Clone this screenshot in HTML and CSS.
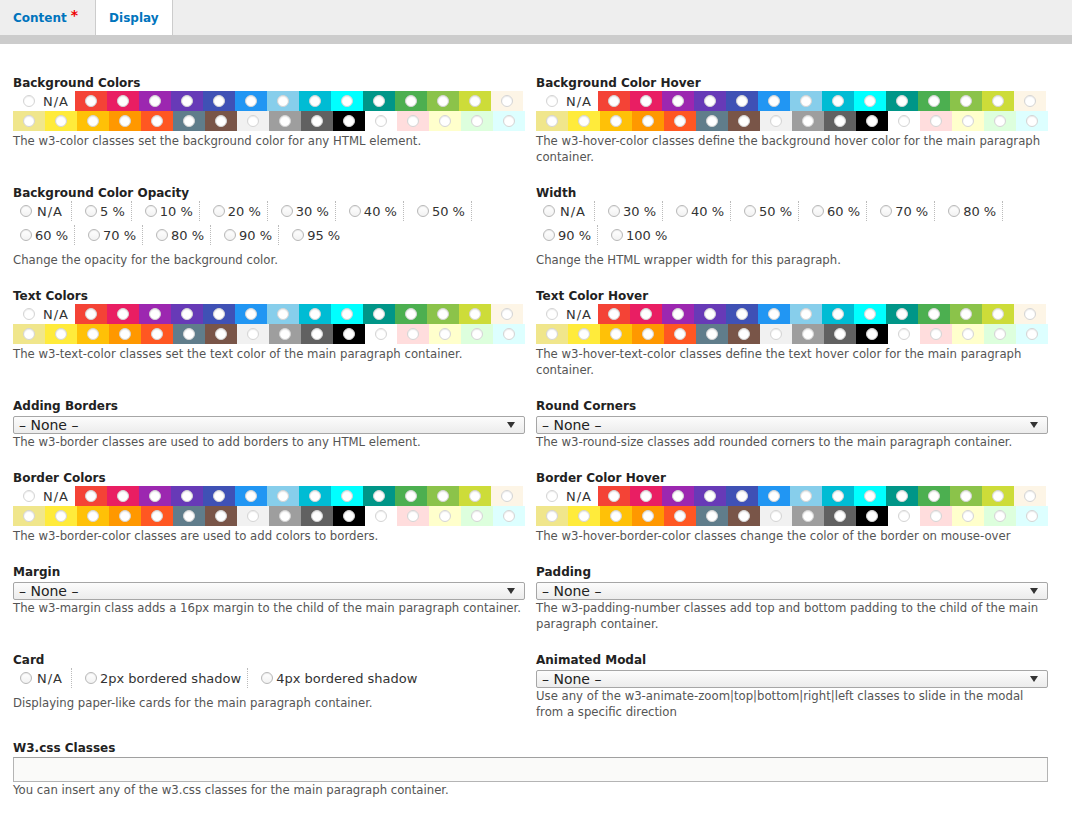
FILE: index.html
```html
<!DOCTYPE html>
<html lang="en">
<head>
    <meta charset="UTF-8">
    <meta name="viewport" content="width=device-width, initial-scale=1.0">
    <title>Paragraph Display Settings</title>
    <link rel="stylesheet" href="styles.css">
</head>
<body>
    <div class="tabs">
        <a class="tab tab-content" href="#">Content <span class="req">*</span></a>
        <a class="tab active" href="#">Display</a>
    </div>
    <div class="tab-line"></div>

    <form class="display-form">
        <div class="field">
            <div class="field-label">Background Colors</div>
            <div class="swatches" data-name="bg_color"></div>
            <div class="desc">The w3-color classes set the background color for any HTML element.</div>
        </div>
        <div class="field">
            <div class="field-label">Background Color Hover</div>
            <div class="swatches" data-name="bg_hover"></div>
            <div class="desc">The w3-hover-color classes define the background hover color for the main paragraph container.</div>
        </div>

        <div class="field">
            <div class="field-label">Background Color Opacity</div>
            <div class="options">
                <label class="option"><input type="radio" name="opacity"> <span class="na">N/A</span></label>
                <label class="option"><input type="radio" name="opacity"> 5 %</label>
                <label class="option"><input type="radio" name="opacity"> 10 %</label>
                <label class="option"><input type="radio" name="opacity"> 20 %</label>
                <label class="option"><input type="radio" name="opacity"> 30 %</label>
                <label class="option"><input type="radio" name="opacity"> 40 %</label>
                <label class="option"><input type="radio" name="opacity"> 50 %</label>
                <label class="option"><input type="radio" name="opacity"> 60 %</label>
                <label class="option"><input type="radio" name="opacity"> 70 %</label>
                <label class="option"><input type="radio" name="opacity"> 80 %</label>
                <label class="option"><input type="radio" name="opacity"> 90 %</label>
                <label class="option"><input type="radio" name="opacity"> 95 %</label>
            </div>
            <div class="desc">Change the opacity for the background color.</div>
        </div>
        <div class="field">
            <div class="field-label">Width</div>
            <div class="options">
                <label class="option"><input type="radio" name="width"> <span class="na">N/A</span></label>
                <label class="option"><input type="radio" name="width"> 30 %</label>
                <label class="option"><input type="radio" name="width"> 40 %</label>
                <label class="option"><input type="radio" name="width"> 50 %</label>
                <label class="option"><input type="radio" name="width"> 60 %</label>
                <label class="option"><input type="radio" name="width"> 70 %</label>
                <label class="option"><input type="radio" name="width"> 80 %</label>
                <label class="option"><input type="radio" name="width"> 90 %</label>
                <label class="option"><input type="radio" name="width"> 100 %</label>
            </div>
            <div class="desc">Change the HTML wrapper width for this paragraph.</div>
        </div>

        <div class="field">
            <div class="field-label">Text Colors</div>
            <div class="swatches" data-name="text_color"></div>
            <div class="desc">The w3-text-color classes set the text color of the main paragraph container.</div>
        </div>
        <div class="field">
            <div class="field-label">Text Color Hover</div>
            <div class="swatches" data-name="text_hover"></div>
            <div class="desc">The w3-hover-text-color classes define the text hover color for the main paragraph container.</div>
        </div>

        <div class="field">
            <div class="field-label">Adding Borders</div>
            <div class="select-wrap">
                <select><option>&ndash; None &ndash;</option></select>
            </div>
            <div class="desc">The w3-border classes are used to add borders to any HTML element.</div>
        </div>
        <div class="field">
            <div class="field-label">Round Corners</div>
            <div class="select-wrap">
                <select><option>&ndash; None &ndash;</option></select>
            </div>
            <div class="desc">The w3-round-size classes add rounded corners to the main paragraph container.</div>
        </div>

        <div class="field">
            <div class="field-label">Border Colors</div>
            <div class="swatches" data-name="border_color"></div>
            <div class="desc">The w3-border-color classes are used to add colors to borders.</div>
        </div>
        <div class="field">
            <div class="field-label">Border Color Hover</div>
            <div class="swatches" data-name="border_hover"></div>
            <div class="desc">The w3-hover-border-color classes change the color of the border on mouse-over</div>
        </div>

        <div class="field">
            <div class="field-label">Margin</div>
            <div class="select-wrap">
                <select><option>&ndash; None &ndash;</option></select>
            </div>
            <div class="desc">The w3-margin class adds a 16px margin to the child of the main paragraph container.</div>
        </div>
        <div class="field">
            <div class="field-label">Padding</div>
            <div class="select-wrap">
                <select><option>&ndash; None &ndash;</option></select>
            </div>
            <div class="desc">The w3-padding-number classes add top and bottom padding to the child of the main paragraph container.</div>
        </div>

        <div class="field">
            <div class="field-label">Card</div>
            <div class="options">
                <label class="option"><input type="radio" name="card"> <span class="na">N/A</span></label>
                <label class="option"><input type="radio" name="card"> 2px bordered shadow</label>
                <label class="option"><input type="radio" name="card"> 4px bordered shadow</label>
            </div>
            <div class="desc">Displaying paper-like cards for the main paragraph container.</div>
        </div>
        <div class="field">
            <div class="field-label">Animated Modal</div>
            <div class="select-wrap">
                <select><option>&ndash; None &ndash;</option></select>
            </div>
            <div class="desc">Use any of the w3-animate-zoom|top|bottom|right|left classes to slide in the modal from a specific direction</div>
        </div>

        <div class="field field-wide">
            <div class="field-label">W3.css Classes</div>
            <input class="text-input" type="text">
            <div class="desc">You can insert any of the w3.css classes for the main paragraph container.</div>
        </div>
    </form>

    <script>
        // build the colour pickers
        const rowOne = ['red', 'pink', 'purple', 'deep-purple', 'indigo', 'blue', 'light-blue',
            'cyan', 'aqua', 'teal', 'green', 'light-green', 'lime', 'sand'];
        const rowTwo = ['khaki', 'yellow', 'amber', 'orange', 'deep-orange', 'blue-grey', 'brown',
            'light-grey', 'grey', 'dark-grey', 'black', 'white', 'pale-red', 'pale-yellow',
            'pale-green', 'pale-blue'];

        const swatch = (name, color) =>
            `<label class="swatch w3-${color}" title="${color}"><input type="radio" name="${name}" value="w3-${color}"></label>`;

        document.querySelectorAll('.swatches').forEach(box => {
            const name = box.dataset.name;
            box.innerHTML = `
                <div class="swatch-row">
                    <label class="swatch swatch-na"><input type="radio" name="${name}" value=""><span class="na">N/A</span></label>
                    ${rowOne.map(c => swatch(name, c)).join('')}
                </div>
                <div class="swatch-row">
                    ${rowTwo.map(c => swatch(name, c)).join('')}
                </div>
            `;
        });
    </script>
</body>
</html>
```

FILE: styles.css
```css
body {
    margin: 0;
    font-family: "DejaVu Sans", sans-serif;
    font-size: 12px;
    color: #333;
    background: #fff;
}

/* tabs */
.tabs {
    display: flex;
    height: 35px;
    background: #eee;
}

.tab {
    display: flex;
    align-items: center;
    padding: 0 13px;
    color: #0074bd;
    font-weight: bold;
    font-size: 12px;
    text-decoration: none;
}

.tab-content {
    padding-right: 17px;
}

.tab .req {
    color: #e00;
    margin-left: 4px;
    position: relative;
    top: -3px;
    font-size: 14px;
}

.tab.active {
    background: #fff;
    border-left: 1px solid #ccc;
    border-right: 1px solid #ccc;
}

.tab-line {
    height: 9px;
    background: #ccc;
}

/* form grid */
.display-form {
    display: grid;
    grid-template-columns: 512px 512px;
    column-gap: 11px;
    row-gap: 20px;
    padding: 31px 0 20px 13px;
}

.field-wide {
    grid-column: 1 / 3;
}

.field-label {
    font-weight: bold;
    font-size: 12px;
    line-height: 16px;
    color: #222;
}

.desc {
    margin-top: 2px;
    line-height: 16px;
    font-size: 11.7px;
    color: #555;
}

.select-wrap + .desc,
.text-input + .desc {
    margin-top: 0;
}

.na {
    letter-spacing: 1px;
}

/* radios */
input[type="radio"] {
    appearance: none;
    -webkit-appearance: none;
    margin: 0;
    width: 12px;
    height: 12px;
    border-radius: 50%;
    border: 1px solid #b8b8b8;
    background: linear-gradient(#fff, #f2f2f2);
    box-shadow: inset 0 1px 1px rgba(0, 0, 0, 0.08);
    flex: none;
}

.swatch-row {
    display: flex;
}

.swatch {
    width: 32px;
    height: 20px;
    display: flex;
    align-items: center;
    justify-content: center;
}

.swatch input[type="radio"] {
    border-color: #d4d4d4;
    background: #fff;
}

.swatch-na {
    width: 62px;
    justify-content: flex-start;
    padding-left: 10px;
    box-sizing: border-box;
    font-size: 13px;
}

.swatch-na .na {
    margin-left: 8px;
}

.options {
    display: flex;
    flex-wrap: wrap;
    row-gap: 4px;
    padding-bottom: 5px;
}

.option {
    display: flex;
    align-items: center;
    height: 20px;
    padding: 0 6px 0 7px;
    margin-right: 6px;
    border-right: 1px dotted #bbb;
    font-size: 13px;
    color: #333;
}

.option:last-child {
    border-right: none;
}

.option input {
    margin-right: 3px;
}

.option .na {
    margin-left: 2px;
    margin-right: 2px;
}

/* selects */
.select-wrap {
    position: relative;
    margin-top: 2px;
}

.select-wrap select {
    appearance: none;
    -webkit-appearance: none;
    display: block;
    width: 100%;
    height: 18px;
    padding: 0 0 0 5px;
    border: 1px solid #a6a6a6;
    border-radius: 2px;
    background: linear-gradient(#fcfcfc, #ececec);
    font-family: "DejaVu Sans", sans-serif;
    font-size: 14px;
    color: #222;
    line-height: 16px;
}

.select-wrap::after {
    content: "";
    position: absolute;
    right: 10px;
    top: 6px;
    border-left: 4px solid transparent;
    border-right: 4px solid transparent;
    border-top: 6px solid #333;
    pointer-events: none;
}

.text-input {
    display: block;
    box-sizing: border-box;
    width: 100%;
    height: 25px;
    margin-top: 1px;
    border: 1px solid #b4b4b4;
    border-top-color: #a0a0a0;
    background: #fafaf9;
}

/* w3 colours */
.w3-red { background: #f44336; }
.w3-pink { background: #e91e63; }
.w3-purple { background: #9c27b0; }
.w3-deep-purple { background: #673ab7; }
.w3-indigo { background: #3f51b5; }
.w3-blue { background: #2196f3; }
.w3-light-blue { background: #87ceeb; }
.w3-cyan { background: #00bcd4; }
.w3-aqua { background: #00ffff; }
.w3-teal { background: #009688; }
.w3-green { background: #4caf50; }
.w3-light-green { background: #8bc34a; }
.w3-lime { background: #cddc39; }
.w3-sand { background: #fdf5e6; }
.w3-khaki { background: #f0e68c; }
.w3-yellow { background: #ffeb3b; }
.w3-amber { background: #ffc107; }
.w3-orange { background: #ff9800; }
.w3-deep-orange { background: #ff5722; }
.w3-blue-grey { background: #607d8b; }
.w3-brown { background: #795548; }
.w3-light-grey { background: #f1f1f1; }
.w3-grey { background: #9e9e9e; }
.w3-dark-grey { background: #616161; }
.w3-black { background: #000; }
.w3-white { background: #fff; }
.w3-pale-red { background: #ffdddd; }
.w3-pale-yellow { background: #ffffcc; }
.w3-pale-green { background: #ddffdd; }
.w3-pale-blue { background: #ddffff; }
```
